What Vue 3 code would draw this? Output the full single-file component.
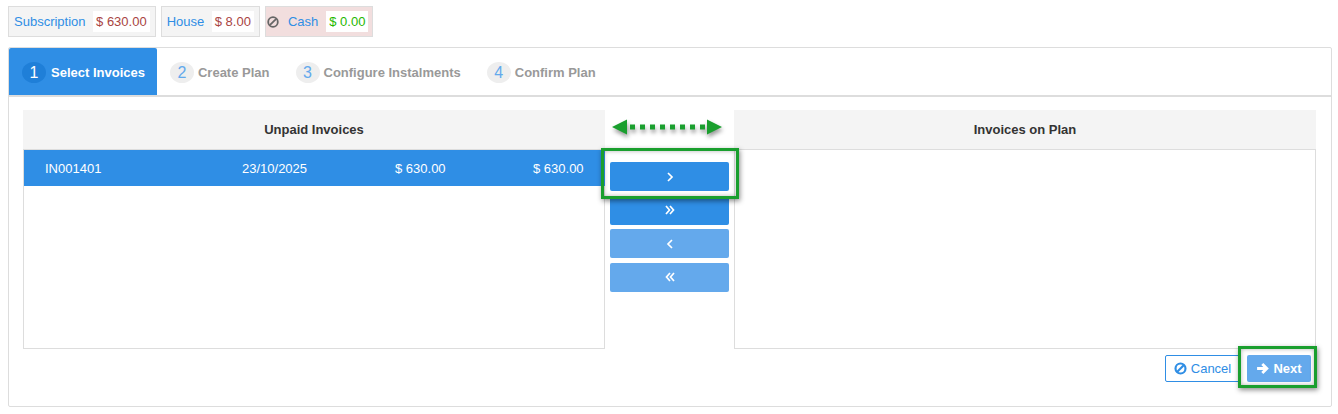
<script setup>
const chips = [
  { name: "Subscription", amount: "$ 630.00" },
  { name: "House", amount: "$ 8.00" },
  { name: "Cash", amount: "$ 0.00", blocked: true },
];

const steps = [
  { num: 1, label: "Select Invoices", active: true },
  { num: 2, label: "Create Plan" },
  { num: 3, label: "Configure Instalments" },
  { num: 4, label: "Confirm Plan" },
];

const moves = [
  { icon: "M6 4l4 4-4 4", faded: false },
  { icon: "M4 4l3.500 4-3.500 4M8 4l3.500 4-3.500 4", faded: false },
  { icon: "M10 4l-4 4 4 4", faded: true },
  { icon: "M8 4l-3.500 4 3.500 4M12 4l-3.500 4 3.500 4", faded: true },
];
</script>

<template>
  <div class="page">
    <div class="chips">
      <div
        v-for="chip in chips"
        :key="chip.name"
        class="chip"
        :class="{ 'chip--blocked': chip.blocked }"
      >
        <svg v-if="chip.blocked" class="chip__ban" viewBox="0 0 12 12">
          <circle cx="6" cy="6" r="4.800" />
          <path d="M2.800 9.200l6.400-6.400" />
        </svg>
        <span class="chip__name">{{ chip.name }}</span>
        <span class="chip__amount">{{ chip.amount }}</span>
      </div>
    </div>

    <div class="card">
      <div class="tabs">
        <div
          v-for="step in steps"
          :key="step.num"
          class="tab"
          :class="{ 'tab--active': step.active }"
        >
          <span class="tab__num">{{ step.num }}</span>
          <span class="tab__label">{{ step.label }}</span>
        </div>
      </div>

      <div class="body">
        <div class="lists">
          <div class="list">
            <div class="list__head">Unpaid Invoices</div>
            <div class="list__box">
              <div class="row">
                <span class="row__ref">IN001401</span>
                <span class="row__date">23/10/2025</span>
                <span class="row__total">$ 630.00</span>
                <span class="row__due">$ 630.00</span>
              </div>
            </div>
          </div>

          <div class="moves">
            <svg class="moves__arrow" viewBox="0 0 110 16">
              <path class="arrow-head" d="M0 8l15-7.500v15zM110 8l-15-7.500v15z" />
              <path class="arrow-line" d="M18 8h75" />
            </svg>
            <div class="moves__buttons">
              <button
                v-for="(move, i) in moves"
                :key="i"
                class="move"
                :class="{ 'move--faded': move.faded }"
              >
                <svg viewBox="0 0 16 16"><path :d="move.icon" /></svg>
              </button>
            </div>
            <div class="mark mark--move"></div>
          </div>

          <div class="list">
            <div class="list__head">Invoices on Plan</div>
            <div class="list__box"></div>
          </div>
        </div>

        <div class="actions">
          <button class="btn btn--cancel">
            <svg viewBox="0 0 12 12">
              <circle cx="6" cy="6" r="4.600" />
              <path d="M2.800 9.200l6.400-6.400" />
            </svg>
            Cancel
          </button>
          <div class="next-wrap">
            <button class="btn btn--next">
              <svg viewBox="0 0 12 12"><path d="M1 6h8.500M5.800 1.800L10 6l-4.200 4.200" /></svg>
              Next
            </button>
            <div class="mark mark--next"></div>
          </div>
        </div>
      </div>
    </div>
  </div>
</template>

<style scoped>
.page {
  padding: 6px 6px 0 8px;
  font-family: "Liberation Sans", Arial, sans-serif;
  font-size: 13px;
  color: #333;
}

.chips {
  display: flex;
  gap: 5px;
  height: 31px;
}

.chip {
  display: flex;
  align-items: center;
  gap: 7.500px;
  padding: 0 5px;
  background: #f4f4f4;
  border: 1px solid #ddd;
}

.chip--blocked {
  gap: 0;
  padding: 0 4px 0 0;
  background: #f2dede;
}

.chip__ban {
  width: 12px;
  height: 12px;
  margin: 0 9px 0 1px;
  fill: none;
  stroke: #666;
  stroke-width: 1.800;
}

.chip__name {
  color: #2f8ee5;
}

.chip--blocked .chip__name {
  margin-right: 8px;
}

.chip__amount {
  padding: 2px 3px;
  height: 21px;
  line-height: 17px;
  box-sizing: border-box;
  background: #fff;
  color: #a94442;
}

.chip--blocked .chip__amount {
  color: #1fb800;
}

.card {
  margin-top: 10px;
  height: 360px;
  box-sizing: border-box;
  border: 1px solid #ddd;
  border-radius: 2px;
}

.tabs {
  display: flex;
  height: 49px;
  box-sizing: border-box;
  border-bottom: 2px solid #ddd;
}

.tab {
  display: flex;
  align-items: center;
  gap: 4px;
  padding: 1px 13px 0;
  font-weight: bold;
  color: #999;
}

.tab--active {
  gap: 5px;
  padding-right: 12px;
  background: #2f8ee5;
  border-radius: 2px 2px 0 0;
  color: #fff;
}

.tab__num {
  width: 24px;
  height: 21px;
  border-radius: 50%;
  background: #eee;
  color: #63a9ec;
  font-size: 16px;
  font-weight: normal;
  line-height: 21px;
  text-align: center;
}

.tab--active .tab__num {
  background: #1f7fd8;
  color: #fff;
}

.body {
  padding: 13px 15px 0 14px;
}

.lists {
  display: flex;
  height: 239px;
}

.list {
  display: flex;
  flex: 1;
  flex-direction: column;
}

.list__head {
  height: 39px;
  line-height: 39px;
  background: #f4f4f4;
  text-align: center;
  font-weight: bold;
}

.list__box {
  flex: 1;
  border: 1px solid #ddd;
}

.row {
  display: flex;
  height: 36px;
  align-items: center;
  margin-right: -1px;
  background: #2f8ee5;
  color: #fff;
}

.row__ref {
  width: 218px;
  padding-left: 21px;
  box-sizing: border-box;
}

.row__date {
  width: 153px;
}

.row__total {
  width: 138px;
}

.moves {
  position: relative;
  width: 129px;
  flex: none;
  display: flex;
  flex-direction: column;
  align-items: center;
}

.moves__arrow {
  align-self: flex-start;
  width: 110px;
  height: 16px;
  margin: 9px 0 0 7px;
  overflow: visible;
  filter: drop-shadow(1px 3px 2px rgba(0, 0, 0, 0.4));
}

.arrow-head {
  fill: #1a9f2e;
}

.arrow-line {
  fill: none;
  stroke: #1a9f2e;
  stroke-width: 5;
  stroke-dasharray: 5 5;
}

.moves__buttons {
  display: flex;
  flex-direction: column;
  gap: 4.670px;
  margin-top: 27px;
}

.move {
  display: flex;
  align-items: center;
  justify-content: center;
  width: 119px;
  height: 29px;
  padding: 0;
  border: 0;
  border-radius: 2px;
  background: #2f8ee5;
}

.move--faded {
  background: #64a9ec;
}

.move svg {
  width: 16px;
  height: 16px;
  fill: none;
  stroke: #fff;
  stroke-width: 1.700;
}

.mark {
  position: absolute;
  box-sizing: border-box;
  border: 3px solid #1a9f2e;
  box-shadow: 1px 2px 5px rgba(0, 0, 0, 0.45), inset 0 0 4px rgba(0, 0, 0, 0.3);
  pointer-events: none;
}

.mark--move {
  left: -4px;
  top: 38px;
  width: 138px;
  height: 51px;
}

.actions {
  display: flex;
  justify-content: flex-end;
  gap: 7px;
  margin-top: 6px;
  padding-right: 5px;
}

.next-wrap {
  position: relative;
}

.mark--next {
  left: -9px;
  top: -9px;
  width: 79px;
  height: 42px;
}

.btn {
  display: flex;
  align-items: center;
  justify-content: center;
  gap: 4px;
  height: 27px;
  padding: 0;
  border-radius: 2px;
  font-family: inherit;
  font-size: 13px;
}

.btn svg {
  width: 13px;
  height: 13px;
  fill: none;
  stroke: currentColor;
  stroke-width: 2;
}

.btn--next svg {
  stroke-width: 2.600;
}

.btn--cancel {
  width: 75px;
  border: 1px solid #2f8ee5;
  background: #fff;
  color: #2f8ee5;
}

.btn--next {
  width: 64px;
  border: 0;
  background: #64a9ec;
  color: #fff;
  font-weight: bold;
}
</style>
